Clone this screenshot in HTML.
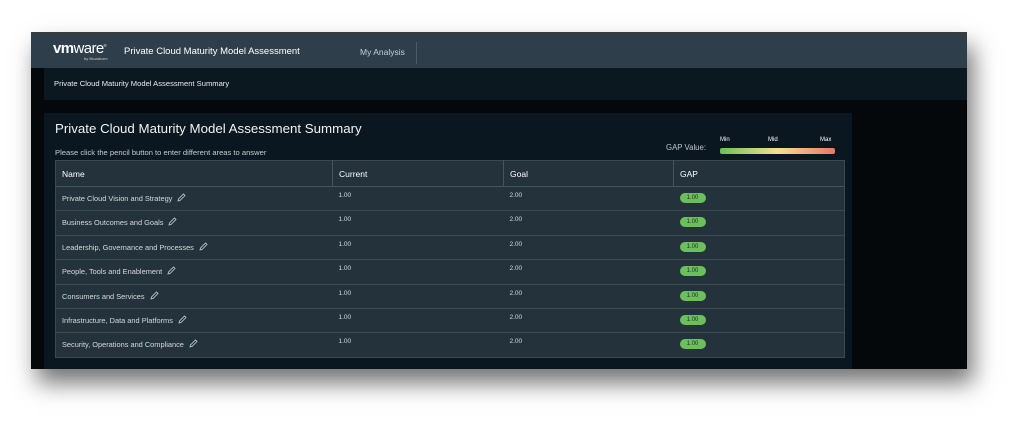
<!DOCTYPE html>
<html><head><style>
*{margin:0;padding:0;box-sizing:border-box}
body{width:1030px;height:432px;background:#fff;font-family:"Liberation Sans",sans-serif;position:relative;overflow:hidden}
#frame{position:absolute;left:31px;top:32px;width:936px;height:337px;background:#04080b;box-shadow:6px 14px 22px rgba(0,0,0,.55);overflow:hidden}
#top{position:absolute;left:0;top:0;width:100%;height:2px;background:#3a3d3d}
#hdr{position:absolute;left:0;top:2px;width:100%;height:34px;background:#2e3f4b}
.logo{position:absolute;left:22px;top:6px;color:#fff;font-size:15px;letter-spacing:-.6px}
.logo b{font-weight:bold}
.by{position:absolute;left:53px;top:22px;font-size:4px;color:#ccc}
.ttl{position:absolute;left:93px;top:12px;font-size:9.5px;color:#fff}
.my{position:absolute;left:329px;top:13px;font-size:8.5px;color:#c8cfd4}
.sep{position:absolute;left:385px;top:8px;width:1px;height:22px;background:#4b5b66}
#sub{position:absolute;left:13px;top:36px;width:923px;height:32px;background:#0b1820}
#sub span{position:absolute;left:10px;top:11px;font-size:7.6px;color:#e8ecef}
#panel{position:absolute;left:13px;top:81px;width:808px;height:260px;background:#0b1720}
h1{position:absolute;left:11px;top:8px;font-size:13.3px;font-weight:normal;color:#f0f3f5}
.hint{position:absolute;left:11px;top:35px;font-size:7.6px;color:#c5ccd1}
.gapv{position:absolute;left:622px;top:30px;font-size:7.8px;color:#bcc4c9}
.lbl{position:absolute;top:24px;font-size:6px;color:#fff}
.bar{position:absolute;left:676px;top:35px;width:115px;height:6px;border-radius:2px;background:linear-gradient(90deg,#6abf5e,#f5e08f 50%,#e8766d)}
table{position:absolute;left:11px;top:47px;width:790px;border-collapse:collapse;background:#23323b;border:1px solid #3a4a55}
th{height:26px;text-align:left;font-size:8.5px;color:#fff;font-weight:normal;padding-left:6px;border-bottom:1px solid #44555f;position:relative}
th+th{border-left:1px solid #44555f}
td{height:24.4px;font-size:6.5px;color:#d5dbdf;padding-left:6px;border-top:1px solid #3a4a55;vertical-align:top;padding-top:6px}
td.n{padding-top:6px;font-size:7.4px}
td.v{padding-top:5px}
.pen{display:inline-block;margin-left:5px;vertical-align:-1px}
.pill{display:inline-block;background:#6cbf5d;color:#1e2d20;border-radius:6px;width:26px;height:10px;text-align:center;font-size:6px;line-height:10px;margin-top:1px}
</style></head><body>
<div id="frame">
<div id="top"></div>
<div id="hdr">
<div class="logo"><b>vm</b>ware<sup style="font-size:4px">®</sup></div>
<div class="by">by Broadcom</div>
<div class="ttl">Private Cloud Maturity Model Assessment</div>
<div class="my">My Analysis</div>
<div class="sep"></div>
</div>
<div id="sub"><span>Private Cloud Maturity Model Assessment Summary</span></div>
<div id="panel">
<h1>Private Cloud Maturity Model Assessment Summary</h1>
<div class="hint">Please click the pencil button to enter different areas to answer</div>
<div class="gapv">GAP Value:</div>
<div class="lbl" style="left:676px">Min</div>
<div class="lbl" style="left:724px">Mid</div>
<div class="lbl" style="left:776px">Max</div>
<div class="bar"></div>
<table>
<tr><th style="width:277px">Name</th><th style="width:171px">Current</th><th style="width:170px">Goal</th><th>GAP</th></tr>
<tr><td class="n">Private Cloud Vision and Strategy<svg class="pen" width="9" height="9" viewBox="0 0 9 9"><path d="M1 8l.5-2L6.5 1l1.5 1.5-5 5z" fill="none" stroke="#c9d0d4" stroke-width=".8"/></svg></td><td class="v">1.00</td><td class="v">2.00</td><td class="v"><span class="pill">1.00</span></td></tr>
<tr><td class="n">Business Outcomes and Goals<svg class="pen" width="9" height="9" viewBox="0 0 9 9"><path d="M1 8l.5-2L6.5 1l1.5 1.5-5 5z" fill="none" stroke="#c9d0d4" stroke-width=".8"/></svg></td><td class="v">1.00</td><td class="v">2.00</td><td class="v"><span class="pill">1.00</span></td></tr>
<tr><td class="n">Leadership, Governance and Processes<svg class="pen" width="9" height="9" viewBox="0 0 9 9"><path d="M1 8l.5-2L6.5 1l1.5 1.5-5 5z" fill="none" stroke="#c9d0d4" stroke-width=".8"/></svg></td><td class="v">1.00</td><td class="v">2.00</td><td class="v"><span class="pill">1.00</span></td></tr>
<tr><td class="n">People, Tools and Enablement<svg class="pen" width="9" height="9" viewBox="0 0 9 9"><path d="M1 8l.5-2L6.5 1l1.5 1.5-5 5z" fill="none" stroke="#c9d0d4" stroke-width=".8"/></svg></td><td class="v">1.00</td><td class="v">2.00</td><td class="v"><span class="pill">1.00</span></td></tr>
<tr><td class="n">Consumers and Services<svg class="pen" width="9" height="9" viewBox="0 0 9 9"><path d="M1 8l.5-2L6.5 1l1.5 1.5-5 5z" fill="none" stroke="#c9d0d4" stroke-width=".8"/></svg></td><td class="v">1.00</td><td class="v">2.00</td><td class="v"><span class="pill">1.00</span></td></tr>
<tr><td class="n">Infrastructure, Data and Platforms<svg class="pen" width="9" height="9" viewBox="0 0 9 9"><path d="M1 8l.5-2L6.5 1l1.5 1.5-5 5z" fill="none" stroke="#c9d0d4" stroke-width=".8"/></svg></td><td class="v">1.00</td><td class="v">2.00</td><td class="v"><span class="pill">1.00</span></td></tr>
<tr><td class="n">Security, Operations and Compliance<svg class="pen" width="9" height="9" viewBox="0 0 9 9"><path d="M1 8l.5-2L6.5 1l1.5 1.5-5 5z" fill="none" stroke="#c9d0d4" stroke-width=".8"/></svg></td><td class="v">1.00</td><td class="v">2.00</td><td class="v"><span class="pill">1.00</span></td></tr>
</table>
</div>
</div>
</body></html>
